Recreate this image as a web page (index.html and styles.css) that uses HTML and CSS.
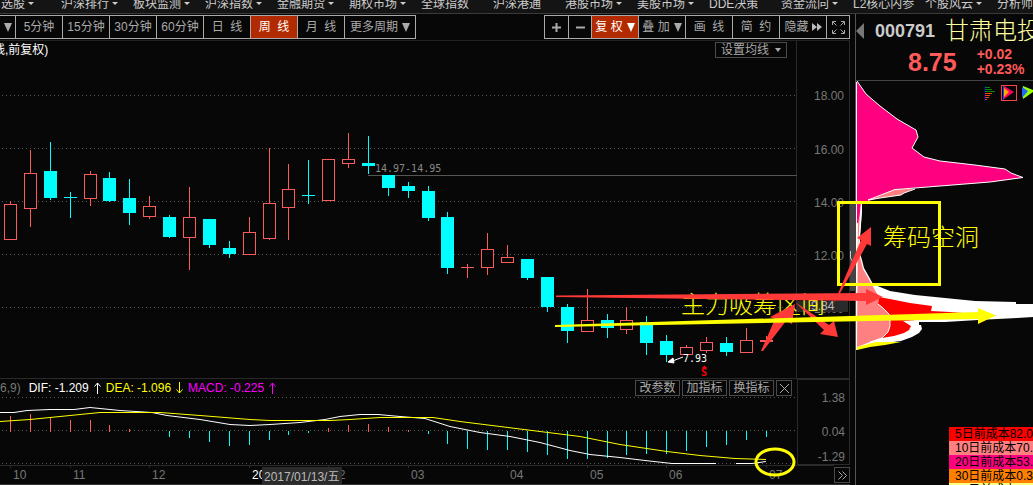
FILE: index.html
```html
<!DOCTYPE html>
<html lang="zh-CN">
<head>
<meta charset="utf-8">
<title>000791 甘肃电投</title>
<link rel="stylesheet" href="styles.css">
</head>
<body>
<nav class="menu">
  <a href="#" class="drop">自选股</a>
  <a href="#" class="drop">沪深排行</a>
  <a href="#" class="drop">板块监测</a>
  <a href="#" class="drop">沪深指数</a>
  <a href="#" class="drop">金融期货</a>
  <a href="#" class="drop">期权市场</a>
  <a href="#">全球指数</a>
  <a href="#">沪深港通</a>
  <a href="#" class="drop">港股市场</a>
  <a href="#" class="drop">美股市场</a>
  <a href="#">DDE决策</a>
  <a href="#" class="drop">资金流向</a>
  <a href="#">L2核心内参</a>
  <a href="#" class="drop">个股风云</a>
  <a href="#">分析师</a>
</nav>
<div class="workspace">
  <main class="main">
    <div class="toolbar">
      <div class="group periods">
        <button class="tiny" aria-label="周期"><i class="tri"></i></button>
        <button>5分钟</button>
        <button>15分钟</button>
        <button>30分钟</button>
        <button>60分钟</button>
        <button>日&nbsp; 线</button>
        <button class="active">周&nbsp; 线</button>
        <button>月&nbsp; 线</button>
        <button class="wide">更多周期<i class="tri"></i></button>
      </div>
      <div class="group tools">
        <button class="small" aria-label="放大"><svg width="9" height="9"><path d="M0 4.5H9M4.5 0V9" stroke="#aaa" stroke-width="2"/></svg></button>
        <button class="small" aria-label="缩小"><svg width="9" height="9"><path d="M0 4.5H9" stroke="#aaa" stroke-width="2"/></svg></button>
        <button class="active">复 权<i class="tri"></i></button>
        <button>叠 加<i class="tri"></i></button>
        <button>画&nbsp; 线</button>
        <button>简&nbsp; 约</button>
        <button class="hide">隐藏<svg width="10" height="8"><path d="M0 0L5 4L0 8ZM5 0L10 4L5 8Z" fill="#bbb"/></svg></button>
        <button class="small" aria-label="全屏"><svg width="13" height="13" fill="none" stroke="#aaa"><path d="M.5 4V.5H4M9 .5H12.5V4M12.5 9V12.5H9M4 12.5H.5V9M1 1L4.500 4.500M12 1L8.500 4.500M12 12L8.500 8.500M1 12L4.500 8.500"/></svg></button>
      </div>
    </div>
    <section class="price">
      <svg viewBox="0 41 850 337">
        <g class="grid"><path d="M2 95.500H798M2 148.500H798M2 201.500H798M2 254.500H798M2 307.500H798"/></g>
        <path class="rule" d="M796.500 41V378M849.500 41V378"/>
        <path d="M368 175.500H797" stroke="#555"/>
        <g id="candles" shape-rendering="crispEdges"></g>
        <text x="-7" y="54" class="title">线,前复权)</text>
        <text x="375" y="172" class="mono dim">14.97-14.95</text>
        <text x="683" y="362" class="mono lit">7.93</text>
        <path d="M683 357L670 362M668 362L673 358L674 363Z" stroke="#fff" fill="#fff"/>
        <text x="701" y="376" class="mark">S</text>
        <path d="M701.500 368.500H707.500L704.500 365.500Z" fill="#f00"/>
        <g class="scale">
          <text x="844" y="100">18.00</text>
          <text x="844" y="154">16.00</text>
          <text x="844" y="207">14.00</text>
          <text x="844" y="260">12.00</text>
          <text x="844" y="313">10.00</text>
        </g>
        <rect x="797" y="301" width="51" height="11" fill="#2a2a2a"/>
        <text x="811" y="310" class="mid">9.84</text>
      </svg>
      <button class="outline average">设置均线<i class="tri mini"></i></button>
    </section>
    <section class="macd">
      <div class="plot">
        <div class="readout">
          <span class="dim">6,9)</span>
          <span class="lit">DIF: -1.209</span>
          <svg class="lit" width="7" height="12"><path d="M3.500 12V1M.5 4.500L3.500 1L6.500 4.500"/></svg>
          <span class="yellow">DEA: -1.096</span>
          <svg class="yellow" width="7" height="12"><path d="M3.500 0V11M.5 7.500L3.500 11L6.500 7.500"/></svg>
          <span class="magenta">MACD: -0.225</span>
          <svg class="magenta" width="7" height="12"><path d="M3.500 12V1M.5 4.500L3.500 1L6.500 4.500"/></svg>
          <div class="actions">
            <button class="outline">改参数</button>
            <button class="outline">加指标</button>
            <button class="outline">换指标</button>
            <button class="outline close" aria-label="关闭"><svg width="9" height="9"><path d="M0 0L9 9M9 0L0 9" stroke="#aaa"/></svg></button>
          </div>
        </div>
        <svg viewBox="0 397 797 68">
          <g class="grid"><path d="M2 397.500H797M2 430.500H797M2 463.500H797"/></g>
          <g id="bars" shape-rendering="crispEdges"></g>
          <path class="curve" stroke="#fff" d="M0 412.500H14L27 410.500L50 409.500H74L90 407.500L120 410.500L152 412.500L167 415.500L200 419.500L230 424.500L250 425.500L270 424.500L300 422.500L325 419.500L340 416.500L360 414.500H378L400 416.500L425 418.500L450 426.500L480 432.500L510 436.500L540 442.500L570 450.500L590 454.500L620 457.500L645 460.500L672 463.500H716M736 463.500H752L766 461.500"/>
          <path class="curve" stroke="#ff0" d="M0 421.500L30 419.500L60 416.500L100 412.500H160L200 415.500L250 419.500L270 420.500H330L350 419.500L380 417.500H433L460 421.500L500 426.500L540 431.500L580 436.500L620 444.500L640 447.500L667 451.500L700 455.500L735 458.500L766 459.500"/>
        </svg>
      </div>
      <div class="axis">
        <span>1.38</span>
        <span>0.04</span>
        <span>-1.29</span>
      </div>
    </section>
    <footer class="dates">
      <svg viewBox="0 465 834 19">
        <path class="rule" d="M0 465.500H834M10.500 465V468M70.500 465V468M149.500 465V468M249.500 465V468M328.500 465V468M408.500 465V468M507.500 465V468M587.500 465V468M666.500 465V468M766.500 465V468"/>
        <g class="month">
          <text x="13" y="479">10</text>
          <text x="73" y="479">11</text>
          <text x="152" y="479">12</text>
          <text x="252" y="479" class="lit">20</text>
          <text x="332" y="479">02</text>
          <text x="411" y="479">03</text>
          <text x="510" y="479">04</text>
          <text x="590" y="479">05</text>
          <text x="669" y="479">06</text>
          <text x="769" y="479">07</text>
        </g>
        <rect x="262" y="467" width="80" height="17" fill="#2b2b2b"/>
        <text x="264" y="481" class="mid">2017/01/13/五</text>
      </svg>
      <button class="outline more" aria-label="更多"><svg width="9" height="9" fill="none" stroke="#aaa"><path d="M.5 .5L4.500 4.500L.5 8.500M4.500 .5L8.500 4.500L4.500 8.500"/></svg></button>
    </footer>
  </main>
  <aside class="side">
    <header class="quote">
      <div class="name">
        <svg width="8" height="16"><path d="M8 0V16L0 8Z" fill="#777"/></svg>
        <strong>000791</strong>
        <span>甘肃电投</span>
      </div>
      <div class="last">
        <strong>8.75</strong>
        <div class="change"><span>+0.02</span><span>+0.23%</span></div>
      </div>
    </header>
    <svg class="chips" viewBox="856 81 177 346">
      <path fill="#fff" d="M857 201L862 201L861 225L859 250L862 260L864 268L868 275L873 284L880 287L890 291L915 295L945 298L975 301L1016 302V304H1033V317L1017 318L978 320L945 322H919V325H921L922 329L919 333L912 337L901 341L885 343L857 348Z"/>
      <path fill="#ff8080" d="M858 212H860L858 250L861 261L863 269L867 276L872 285L879 297L878 304L883 308L889 314L890 320V326L888 332L882 338L870 342L857 347Z"/>
      <path fill="#f00" d="M879 297L890 299L910 303L932 306L931 311L950 312L997 315.500L980 317L930 319L903 321L911 326L909 330L904 333L894 336L882 338L888 332L890 326V320L889 314L883 308L878 304Z"/>
      <path fill="none" stroke="#fff" d="M878 304L883 308L889 314L890 320V326L888 332L882 338L870 342"/>
      <path fill="#ff0" d="M857 350L870 347L885 345L901 342H876L857 347Z"/>
      <path fill="#ff8080" d="M857 201L895 189L914 189L904 193L901 195L880 198L868 201Z"/>
      <path fill="#ff0080" d="M857 81L866 94L880 106L897 119L916 130L918 137L912 148L924 157L940 161L975 165L1005 169L1011 173L1023 177.500L990 182L940 186L915 188L895 189L868 201H861L860 212L858 223H857Z"/>
      <path fill="none" stroke="#fff" d="M857 81L866 94L880 106L897 119L916 130L918 137L912 148L924 157L940 161L975 165L1005 169L1011 173L1023 177.500L990 182L940 186L915 188L895 189.500L868 200M915 189L904 193L901 195L880 198L868 200M861.500 202V212L859.500 235V250"/>
      <path stroke="#fff" d="M856.500 82V350"/>
      <g shape-rendering="crispEdges" fill="none">
        <path d="M984.500 86V101" stroke="#00a"/>
        <path d="M985 87.500H990M985 89.500H992M985 91.500H995" stroke="#080"/>
        <path d="M985 93.500H992M985 95.500H990M985 97.500H989M985 99.500H987" stroke="#e40"/>
        <path d="M1001.500 85.500H1016.500V100.500H1001.500Z" stroke="#ff4040"/>
        <path d="M1003.500 86V100" stroke="#24f"/>
      </g>
      <path d="M1004 86L1014 92L1004 99Z" fill="#ff0060"/>
      <path d="M1004 88L1009 92L1004 97Z" fill="#fa0"/>
      <path d="M1023 86L1033 90V92L1023 99Z" fill="#9f0"/>
      <path d="M1022 87L1028 91L1022 98Z" fill="#26f"/>
    </svg>
    <ul class="legend">
      <li class="d5">5日前成本82.0</li>
      <li class="d10">10日前成本70.</li>
      <li class="d20">20日前成本53.</li>
      <li class="d30">30日前成本0.3</li>
      <li class="d60">60日前成本</li>
    </ul>
  </aside>
  <svg class="notes" viewBox="0 15 1033 470">
    <path d="M850 201H856V291H850Z" fill="#444"/>
    <path d="M850.500 251V258L853 262" fill="none" stroke="#ccc"/>
    <text x="681" y="313">主力吸筹区间</text>
    <text x="883" y="246">筹码空洞</text>
    <path d="M838.500 202.500H939.500V284.500H838.500Z" fill="none" stroke="#ff0" stroke-width="3"/>
    <g fill="#ff3838">
      <path d="M556 295.500L866 293V289L883 297L866 305V301L556 297Z"/>
      <path d="M761 351L775 319L770 317L795 304L792 324L786 321L763 351Z"/>
      <path d="M795 302L829 325L834 321L838 337L820 334L824 330Z"/>
      <path d="M834 303L861 240L857 238L871 227V246L867 244L838 297Z"/>
    </g>
    <path d="M555 325L978 312V308L996 315.500L978 324V319L555 327Z" fill="#ff0"/>
    <ellipse cx="775" cy="462" rx="19" ry="13" fill="none" stroke="#ff0" stroke-width="3"/>
  </svg>
</div>
<script src="chart.js"></script>
</body>
</html>
```
FILE: styles.css
```css
* { box-sizing: border-box; }
body {
  margin: 0;
  height: 100vh;
  overflow: hidden;
  display: flex;
  flex-direction: column;
  background: #070707;
  color: #aaa;
  font: 12px/16px "Liberation Sans", "Noto Sans CJK SC", sans-serif;
}
svg { display: block; }
text { font-size: 12px; }
button {
  margin: 0;
  padding: 0;
  background: none;
  border: 0;
  color: inherit;
  font: inherit;
  white-space: nowrap;
  display: flex;
  align-items: center;
  justify-content: center;
}
.menu {
  flex: none;
  display: flex;
  height: 14px;
  padding-left: 61px;
  overflow: hidden;
  background: #141414;
  border-bottom: 1px solid #3a3a3a;
}
.menu a {
  flex: 0 0 72px;
  margin-top: -4px;
  color: #ccc;
  text-decoration: none;
  white-space: nowrap;
}
.menu a:first-child { margin-left: -72px; }
.drop::after {
  content: "";
  display: inline-block;
  margin-left: 3px;
  vertical-align: 3px;
  border: 3px solid transparent;
  border-top-color: #ccc;
  border-bottom: 0;
}
.workspace {
  position: relative;
  flex: none;
  display: grid;
  grid-template-columns: minmax(0, 850fr) minmax(0, 178fr);
  gap: 5px;
  padding-top: 1px;
}
.main { min-width: 0; }
.side { min-width: 0; border-left: 1px solid #555; margin-top: -1px; }

.toolbar {
  display: flex;
  justify-content: space-between;
  height: 26px;
  border-bottom: 1px solid #222;
}
.group { display: flex; height: 24px; border: 1px solid #aaa; }
.periods { border-left: 0; }
.group button { width: 47px; border-left: 1px solid #aaa; }
.group button:first-child { border-left: 0; }
.group .tiny { width: 15px; }
.group .small { width: 23px; }
.group .wide { width: 71px; }
.group .active { background: #b22a00; color: #fff; }
.hide svg { margin-left: 3px; }
.tri {
  margin-left: 4px;
  border: 4px solid transparent;
  border-top: 9px solid currentColor;
  border-bottom: 0;
}
.tiny .tri { margin-left: 0; }
.tri.mini { margin-left: 6px; border-width: 4px 3px 0; }

.price { position: relative; border-bottom: 1px solid #2a2a2a; }
.outline {
  height: 16px;
  width: 45px;
  line-height: 14px;
  border: 1px solid #4a4a4a;
}
.average {
  position: absolute;
  top: 1px;
  right: 63px;
  width: 72px;
}
.grid path { stroke: #555; stroke-dasharray: 1 3; }
.rule { stroke: #2a2a2a; }
.title { fill: #fff; }
.mono { font: 10px "DejaVu Sans Mono", monospace; }
.mark { font: bold 10px "DejaVu Sans Mono", monospace; fill: #f00; }
text.dim { fill: #888; }
text.mid { fill: #bbb; }
.scale text { fill: #777; text-anchor: end; }
.month { fill: #777; }
text.lit { fill: #fff; }
.curve { fill: none; }

.macd { display: grid; grid-template-columns: minmax(0, 797fr) minmax(0, 53fr); }
.readout { display: flex; align-items: center; gap: 5px; height: 18px; white-space: nowrap; }
.readout > svg { fill: none; stroke: currentColor; }
.dim { color: #777; }
span.dim { margin-right: 3px; }
.lit { color: #fff; }
.yellow { color: #ff0; }
.magenta { color: #f0f; }
.actions { display: flex; gap: 2px; margin-left: auto; padding-right: 5px; }
.actions .close { width: 16px; }
.axis {
  display: flex;
  flex-direction: column;
  padding: 11px 4px 0;
  border: 1px solid #2a2a2a;
  color: #777;
  line-height: 14px;
  text-align: right;
}
.axis span:nth-child(1) { margin-bottom: 20px; }
.axis span:nth-child(2) { margin-bottom: 11px; }
.dates { display: grid; grid-template-columns: minmax(0, 834fr) minmax(0, 16fr); border-bottom: 1px solid #333; }
.more { width: 16px; margin-top: 2px; }

.quote {
  height: 67px;
  padding-top: 5px;
  border-bottom: 1px solid #444;
  overflow: hidden;
}
.name { display: flex; align-items: center; height: 24px; white-space: nowrap; }
.name svg { flex: none; }
.name strong { margin-left: 11px; font-size: 18px; color: #ccc; }
.name span { margin-left: 10px; font-size: 24px; font-weight: 300; line-height: 24px; color: #ffffa0; }
.last {
  display: flex;
  align-items: center;
  gap: 20px;
  padding: 4px 0 0 52px;
  color: #ff5a5a;
}
.last strong { font-size: 25px; }
.change { display: grid; font-size: 14px; line-height: 15px; font-weight: bold; }
.chips { width: 100%; }
.legend {
  list-style: none;
  margin: 0 0 0 auto;
  padding: 0;
  width: 84px;
  height: 58px;
  overflow: hidden;
  color: #000;
  line-height: 14px;
  white-space: nowrap;
}
.legend li { height: 14px; padding-left: 6px; overflow: hidden; }
.d5 { background: #f00; }
.d10 { background: #ff8080; }
.d20 { background: #ff0080; }
.d30 { background: #ff8000; }
.d60 { background: #ffff80; }

.notes { position: absolute; top: 1px; left: 0; width: 100%; pointer-events: none; }
.notes text { font-size: 24px; font-weight: 300; fill: #ff0; }
```
FILE: chart.js
```js
const RED = "#ff5a5a";
const CYAN = "#00ffff";
const NS = "http://www.w3.org/2000/svg";

// centre x, body top, body bottom, wick top, wick bottom, rising
const candles = [
  [10, 204, 240, 201, 240, 1], [30, 173, 209, 150, 227, 1], [50, 171, 198, 142, 200, 0],
  [70, 197, 198, 192, 218, 0], [90, 174, 199, 171, 206, 1], [109, 178, 201, 172, 202, 0],
  [129, 198, 213, 179, 225, 0], [149, 206, 217, 196, 219, 1], [169, 217, 237, 215, 238, 0],
  [189, 217, 238, 187, 270, 1], [209, 219, 245, 219, 248, 0], [229, 248, 254, 241, 258, 0],
  [249, 232, 255, 217, 255, 1], [269, 203, 239, 148, 240, 1], [288, 189, 208, 164, 240, 1],
  [308, 195, 196, 160, 204, 0], [328, 159, 201, 159, 201, 1], [348, 159, 164, 133, 168, 1],
  [368, 163, 166, 136, 174, 0], [388, 175, 188, 175, 196, 0], [408, 186, 191, 182, 198, 0],
  [428, 191, 218, 186, 221, 0], [447, 217, 268, 212, 274, 0], [467, 267, 268, 264, 278, 1],
  [487, 249, 268, 233, 275, 1], [507, 257, 263, 245, 263, 1], [527, 259, 278, 259, 280, 0],
  [547, 277, 307, 277, 312, 0], [567, 307, 331, 304, 343, 0], [587, 320, 332, 289, 332, 1],
  [607, 320, 328, 314, 338, 0], [626, 320, 330, 307, 334, 1], [646, 322, 343, 316, 355, 0],
  [666, 341, 355, 335, 362, 0], [686, 347, 355, 345, 355, 1], [706, 342, 351, 337, 353, 1],
  [726, 343, 352, 337, 356, 0], [746, 340, 353, 328, 353, 1], [766, 340, 342, 336, 342, 1]
];

// end of each histogram bar on the chart's vertical scale
const bars = [
  416, 414, 417, 420, 420, 425, 429, 431, 437, 438, 442, 446, 445, 440, 435, 433, 428, 425, 424, 427,
  430, 434, 444, 449, 450, 450, 452, 455, 459, 459, 458, 455, 454, 454, 451, 447, 445, 440, 437
];
const ZERO = 431;

function rect(parent, x, y, width, height, fill) {
  const el = document.createElementNS(NS, "rect");
  for (const [key, value] of Object.entries({ x, y, width, height, fill })) el.setAttribute(key, value);
  parent.append(el);
}

const candleLayer = document.getElementById("candles");
const barLayer = document.getElementById("bars");
candles.forEach(([x, top, bottom, high, low, rising], i) => {
  const colour = rising ? RED : CYAN;
  rect(candleLayer, x, high, 1, low - high, colour);
  rect(candleLayer, x - 6, top, 13, bottom - top, colour);
  if (rising && bottom - top > 2) rect(candleLayer, x - 5, top + 1, 11, bottom - top - 2, "#070707");

  const end = bars[i];
  if (end < ZERO) rect(barLayer, x, end, 1, ZERO - end + 1, RED);
  else if (end > ZERO) rect(barLayer, x, ZERO, 1, end - ZERO, CYAN);
});
```
